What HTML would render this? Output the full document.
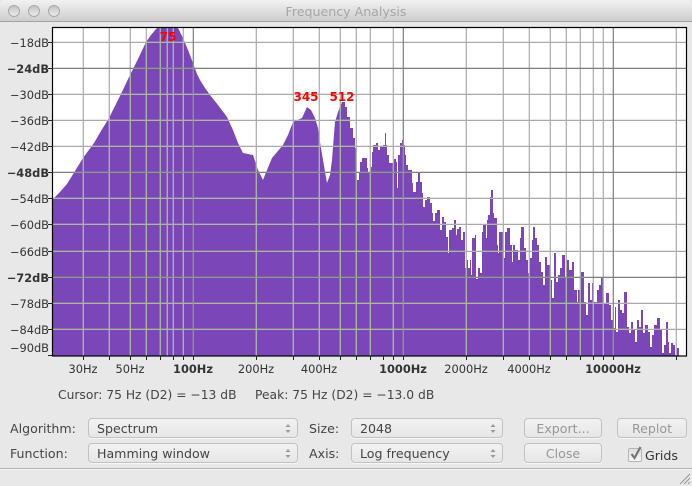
<!DOCTYPE html>
<html>
<head>
<meta charset="utf-8">
<style>
html,body{margin:0;padding:0;width:692px;height:486px;overflow:hidden;background:#e8e8e8;font-family:"DejaVu Sans","Liberation Sans",sans-serif;color:#3a3a3a}
.abs{position:absolute}
#title{left:0;top:0;width:692px;height:21px;background:linear-gradient(#f2f2f2,#cdcdcd);border-bottom:1px solid #a3a3a3;border-radius:5px 5px 0 0;text-align:center;font-size:12.6px;line-height:23px;color:#a6a6a6}
.dot{position:absolute;top:5px;width:10px;height:10px;border-radius:50%;border:1px solid #a9a9a9;background:linear-gradient(#c4c4c4,#ececec)}
.lbl{position:absolute;font-size:12.6px;line-height:16px;color:#444;white-space:nowrap}
.sel,.btn{position:absolute;box-sizing:border-box;height:20px;border:1px solid #c2c2c2;border-radius:4px;background:linear-gradient(#f2f2f2,#e6e6e6);font-size:12.6px;line-height:20px;color:#444;white-space:nowrap;box-shadow:0 1px 0 #f6f6f6}
.sel{padding-left:8px}
.btn{text-align:center;color:#979797}
.sel svg{position:absolute;right:5px;top:3px}
</style>
</head>
<body>
<div class="abs" id="title">Frequency Analysis
<span class="dot" style="left:8px"></span><span class="dot" style="left:28px"></span><span class="dot" style="left:48px"></span>
</div>

<svg class="abs" style="left:0;top:0" width="692" height="486" viewBox="0 0 692 486" font-family="'DejaVu Sans','Liberation Sans',sans-serif" font-size="11.4" fill="#333">
<defs>
<clipPath id="sp"><path id="specp" d="M53 356V199L60 192L67 184L75 171L83 158L94 143L101 131L109 118L120 96L130 75L139 57L146 42L151 35L157 28H178L183 38L188 50L193 63L197 74L200 80L205 88L210 95L218 105L227 117L233 130L238 143L243 153L253 155L258 170L263 180L267 170L272 158L283 145L288 135L293 122L302 118L307 107L311 110L315 118L318 128L320 142L323 160L327 183L330 175L332 160L335 122L338 112L342 102
H345V107H347V117H350V128H353V138H355V148H356V162H357V180H359V173H360V162H362V158H367V168H368V172H370V167H372V152H373V145H376V143H378V150H380V147H383V145H385V133H386V145H387V155H389V163H394V159H396V162H397V188H398V155H400V143H402V140H404V145H405V155H406V165H408V170H412V183H413V192H416V182H418V173H420V182H422V193H423V207H425V200H427V197H430V203H432V213H433V221H435V213H437V210H440V230H442V217H444V222H446V237H448V253H449V230H452V228H454V220H456V235H457V229H459V227H461V240H463V232H465V268H467V260H468V268H470V260H471V275H472V238H475V235H476V279H478V268H480V273H482V232H483V225H486V238H487V220H488V215H490V197H491V190H493V213H494V218H497V245H498V253H499V232H503V258H505V232H507V228H510V245H512V262H513V245H515V250H518V260H520V238H521V227H524V248H526V260H528V273H530V258H532V240H533V227H535V238H537V245H539V262H541V272H543V285H545V257H547V265H550V280H552V298H554V253H556V282H558V275H560V268H562V255H565V277H566V260H569V270H572V262H574V290H577V302H578V290H581V272H584V302H586V315H588V283H590V300H592V283H594V302H597V290H599V285H601V278H603V297H604V303H606V293H609V305H611V320H613V328H615V307H616V332H618V300H620V310H622V313H624V292H627V327H629V333H631V322H633V330H635V342H637V320H639V327H641V310H643V333H645V325H648V332H650V347H652V335H654V325H657V318H660V330H662V353H664V345H666V322H668V342H669V353H671V343H673V345H675V355H677V348H679V356Z"/></clipPath>
</defs>
<rect x="53" y="27" width="634" height="329" fill="#fff"/>
<use href="#specp" fill="#7a46b8"/>
<g stroke="#a9a9a9" stroke-width="1.2" fill="none">
<path d="M83.300 27V356M109.300 27V356M130.300 27V356M146.300 27V356M160.300 27V356M167.300 27V356M173.300 27V356M183.300 27V356M256.300 27V356M293.300 27V356M319.300 27V356M340.300 27V356M356.300 27V356M370.300 27V356M393.300 27V356M466.300 27V356M503.300 27V356M529.300 27V356M550.300 27V356M566.300 27V356M580.300 27V356M593.300 27V356M603.300 27V356M676.300 27V356"/>
<path d="M53 42.400H687M53 94.400H687M53 120.400H687M53 146.400H687M53 198.400H687M53 224.400H687M53 251.400H687M53 303.400H687M53 329.400H687"/>
<path stroke="#7e7e7e" d="M53 68.400H687M53 172.400H687M53 277.400H687M193.300 27V356M403.300 27V356M613.300 27V356"/>
</g>
<g clip-path="url(#sp)" stroke="#a9b6a2" stroke-width="1.2" fill="none">
<path d="M83.300 27V356M109.300 27V356M130.300 27V356M146.300 27V356M160.300 27V356M167.300 27V356M173.300 27V356M183.300 27V356M256.300 27V356M293.300 27V356M319.300 27V356M340.300 27V356M356.300 27V356M370.300 27V356M393.300 27V356M466.300 27V356M503.300 27V356M529.300 27V356M550.300 27V356M566.300 27V356M580.300 27V356M593.300 27V356M603.300 27V356M676.300 27V356"/>
<path d="M53 42.400H687M53 94.400H687M53 120.400H687M53 146.400H687M53 198.400H687M53 224.400H687M53 251.400H687M53 303.400H687M53 329.400H687"/>
<path stroke="#8e9a88" d="M53 68.400H687M53 172.400H687M53 277.400H687M193.300 27V356M403.300 27V356M613.300 27V356"/>
</g>
<rect x="52.500" y="27.500" width="634" height="328.500" fill="none" stroke="#000" stroke-width="1.2"/>
<path stroke="#222" shape-rendering="crispEdges" d="M48 42.500H53M48 68.500H53M48 94.500H53M48 120.500H53M48 146.500H53M48 172.500H53M48 198.500H53M48 224.500H53M48 251.500H53M48 277.500H53M48 303.500H53M48 329.500H53M48 355.500H53M83.500 356V360M109.500 356V360M130.500 356V360M146.500 356V360M160.500 356V360M173.500 356V360M183.500 356V360M193.500 356V360M256.500 356V360M293.500 356V360M319.500 356V360M340.500 356V360M356.500 356V360M370.500 356V360M383.500 356V360M393.500 356V360M403.500 356V360M466.500 356V360M503.500 356V360M529.500 356V360M550.500 356V360M566.500 356V360M580.500 356V360M593.500 356V360M603.500 356V360M613.500 356V360M676.500 356V360"/>
<g text-anchor="end">
<text x="49" y="47">−18dB</text>
<text x="49" y="73" font-weight="bold">−24dB</text>
<text x="49" y="99">−30dB</text>
<text x="49" y="125">−36dB</text>
<text x="49" y="151">−42dB</text>
<text x="49" y="177" font-weight="bold">−48dB</text>
<text x="49" y="203">−54dB</text>
<text x="49" y="229">−60dB</text>
<text x="49" y="256">−66dB</text>
<text x="49" y="282" font-weight="bold">−72dB</text>
<text x="49" y="308">−78dB</text>
<text x="49" y="334">−84dB</text>
<text x="49" y="352">−90dB</text>
</g>
<g text-anchor="middle">
<text x="83" y="373">30Hz</text>
<text x="130" y="373">50Hz</text>
<text x="193" y="373" font-weight="bold">100Hz</text>
<text x="256" y="373">200Hz</text>
<text x="319" y="373">400Hz</text>
<text x="403" y="373" font-weight="bold">1000Hz</text>
<text x="466" y="373">2000Hz</text>
<text x="529" y="373">4000Hz</text>
<text x="613" y="373" font-weight="bold">10000Hz</text>
</g>
<g fill="#ff0000" font-weight="bold" font-size="12" text-anchor="middle">
<text x="168" y="41">75</text>
<text x="306" y="101">345</text>
<text x="342" y="101">512</text>
</g>
<path d="M0 468.500H692" stroke="#b5b5b5" shape-rendering="crispEdges"/>
<path d="M0 469.500H692" stroke="#f4f4f4" shape-rendering="crispEdges"/>
<path d="M680 484L690 474M684 484L690 478M688 484L690 482" stroke="#999" fill="none"/>
</svg>

<div class="lbl" style="left:58px;top:387px;font-size:12.3px">Cursor: 75 Hz (D2) = −13 dB</div>
<div class="lbl" style="left:255px;top:387px;font-size:12.3px">Peak: 75 Hz (D2) = −13.0 dB</div>

<div class="lbl" style="left:10px;top:421px">Algorithm:</div>
<div class="lbl" style="left:10px;top:446px">Function:</div>
<div class="lbl" style="left:309px;top:421px">Size:</div>
<div class="lbl" style="left:309px;top:446px">Axis:</div>

<div class="sel" style="left:88px;top:418px;width:210px">Spectrum<svg width="8" height="12"><path d="M4 2L6.500 5H1.500ZM4 11L1.500 8H6.500Z" fill="#999"/></svg></div>
<div class="sel" style="left:88px;top:443px;width:210px">Hamming window<svg width="8" height="12"><path d="M4 2L6.500 5H1.500ZM4 11L1.500 8H6.500Z" fill="#999"/></svg></div>
<div class="sel" style="left:351px;top:418px;width:152px">2048<svg width="8" height="12"><path d="M4 2L6.500 5H1.500ZM4 11L1.500 8H6.500Z" fill="#999"/></svg></div>
<div class="sel" style="left:351px;top:443px;width:152px">Log frequency<svg width="8" height="12"><path d="M4 2L6.500 5H1.500ZM4 11L1.500 8H6.500Z" fill="#999"/></svg></div>

<div class="btn" style="left:524px;top:418px;width:78px">Export...</div>
<div class="btn" style="left:524px;top:443px;width:78px">Close</div>
<div class="btn" style="left:617px;top:418px;width:70px">Replot</div>

<div class="abs" style="left:628px;top:448px;width:12px;height:12px;border:1px solid #b5b5b5;border-radius:2px;background:linear-gradient(#e0e0e0,#f6f6f6)"></div>
<svg class="abs" style="left:628px;top:445px" width="16" height="16"><path d="M3.500 9L6.500 13L12.500 2" stroke="#777" stroke-width="2.200" fill="none"/></svg>
<div class="lbl" style="left:645px;top:448px;color:#333">Grids</div>
</body>
</html>
